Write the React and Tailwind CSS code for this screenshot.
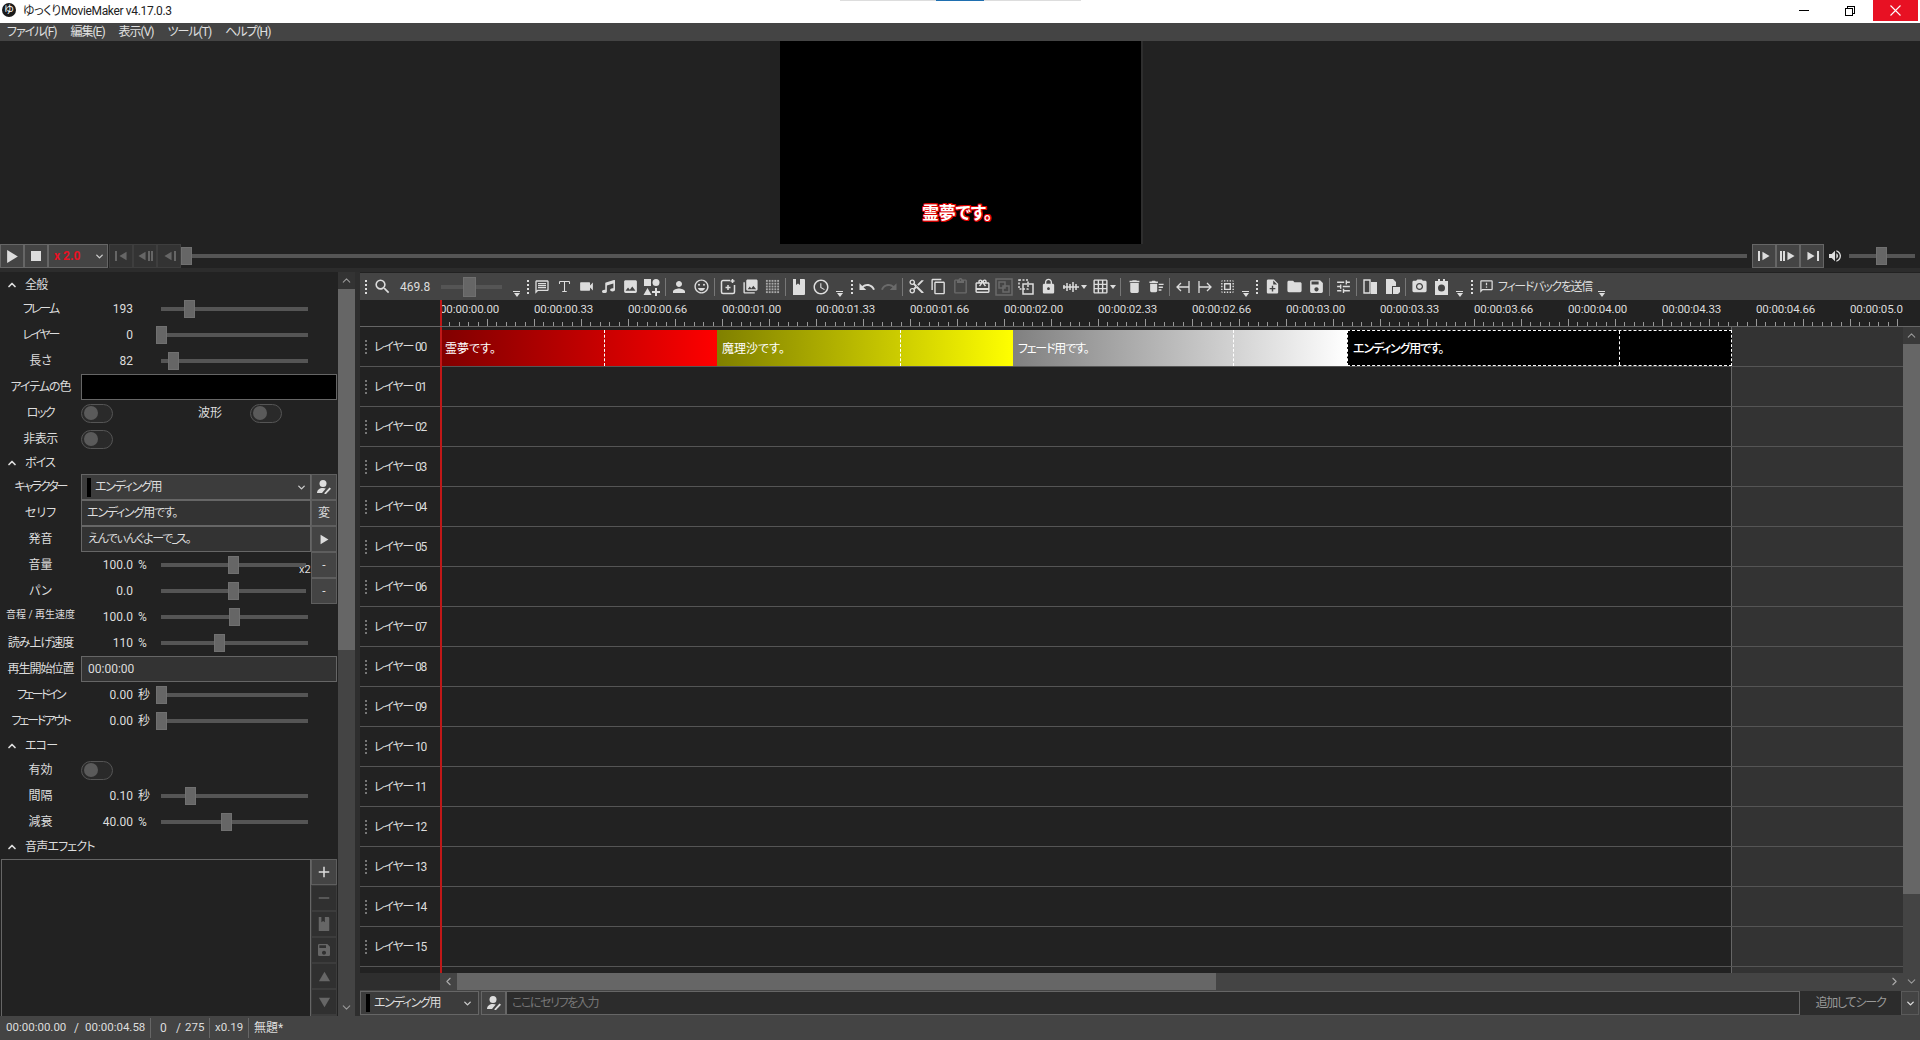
import React from 'react';
import { ChevronDown, ChevronUp, ChevronLeft, ChevronRight, Type } from 'lucide-react';
import { FaMusic } from 'react-icons/fa';
import {
  MdSearch, MdOutlineMessage, MdVideocam, MdImage, MdPerson, MdOutlineEmojiEmotions, MdPhotoLibrary,
  MdOutlineAccessTime, MdUndo, MdRedo, MdContentCut, MdContentCopy, MdOutlineContentPaste,
  MdOutlineCardGiftcard, MdLock, MdGridOn, MdDelete, MdDeleteSweep,
  MdSelectAll, MdNoteAdd, MdFolder, MdSave, MdTune, MdPhotoCamera, MdOutlineFeedback,
  MdVolumeUp, MdAdd, MdRemove,
} from 'react-icons/md';

// small hand drawn icons the packages don't have
const ShapesIcon = () => (
  <svg width="18" height="18" viewBox="0 0 18 18" fill="currentColor">
    <rect x="1" y="1" width="7" height="7" />
    <circle cx="13" cy="4.5" r="3.5" />
    <path d="M4.5 10l4 7h-8z" />
    <path d="M12 10h2v3h3v2h-3v3h-2v-3H9v-2h3z" />
  </svg>
);
const AddFrameIcon = () => (
  <svg width="16" height="16" viewBox="0 0 16 16" fill="none" stroke="currentColor" strokeWidth="1.5">
    <path d="M10 1.5H3a1.5 1.5 0 0 0-1.500 1.500v10A1.500 1.500 0 0 0 3 14.500h10a1.500 1.500 0 0 0 1.500-1.500V6" />
    <path d="M8 6v5M5.500 8.500h5M12.500 0v4M10.500 2h4" />
  </svg>
);
const DotGridIcon = () => (
  <svg width="15" height="15" viewBox="0 0 16 16" fill="#a8a8a8">
    {[1, 4, 7, 10, 13].map(y => [1, 4, 7, 10, 13].map(x => <rect key={x + '-' + y} x={x} y={y} width="2" height="2" />))}
  </svg>
);
const BookIcon = ({ size = 18 }) => (
  <svg width={size - 2} height={size} viewBox="0 0 16 18" fill="currentColor">
    <path d="M2 1h3v6l2-1.500L9 7V1h4a1 1 0 0 1 1 1v14a1 1 0 0 1-1 1H2z" />
  </svg>
);
const LayersIcon = () => (
  <svg width="18" height="18" viewBox="0 0 18 18" fill="none" stroke="currentColor" strokeWidth="1.5">
    <path d="M2 2h9v9H2z" strokeDasharray="2 1.500" />
    <path d="M6 6h10v10H6z" />
  </svg>
);
const DimFrameIcon = () => (
  <svg width="18" height="18" viewBox="0 0 18 18" fill="none" stroke="currentColor" strokeWidth="1.500">
    <rect x="1" y="1" width="16" height="16" />
    <rect x="4" y="4" width="6" height="6" />
    <rect x="8" y="8" width="6" height="6" />
  </svg>
);
const WaveIcon = () => (
  <svg width="16" height="16" viewBox="0 0 16 16" stroke="currentColor" strokeWidth="1.500">
    <path d="M1 6v4M4 4v8M7 5v6M10 3v10M13 5v6M0 8h16" />
  </svg>
);
const ArrowBarLeft = () => (
  <svg width="16" height="16" viewBox="0 0 16 16" fill="none" stroke="currentColor" strokeWidth="1.300">
    <path d="M14 2v12M14 8H2M6 4L2 8l4 4" />
  </svg>
);
const ArrowBarRight = () => (
  <svg width="16" height="16" viewBox="0 0 16 16" fill="none" stroke="currentColor" strokeWidth="1.300">
    <path d="M2 2v12M2 8h12M10 4l4 4-4 4" />
  </svg>
);
const PagesIcon = ({ flip }) => (
  <svg width="17" height="17" viewBox="0 0 17 17" fill="currentColor">
    {flip ? (
      <>
        <path d="M2 1h7l3 3v4H8v8H2z" />
        <path d="M9 9h7v5l-2 2H9z" />
      </>
    ) : (
      <>
        <path fill="none" stroke="currentColor" strokeWidth="1.400" d="M2 2h6v13H2z" />
        <path d="M9 4h6v12H9z" />
      </>
    )}
  </svg>
);
const ClipCamIcon = () => (
  <svg width="17" height="18" viewBox="0 0 17 18" fill="currentColor">
    <path fillRule="evenodd" d="M2 3h3V1h2v2h3V1h2v2h3v14H2zM8.500 6.500a3.500 3.500 0 1 0 0 7 3.500 3.500 0 0 0 0-7z" />
  </svg>
);
const PersonEdit = () => (
  <svg width="16" height="16" viewBox="0 0 16 16" fill="currentColor">
    <circle cx="7" cy="4.500" r="3.500" />
    <path d="M1 14c0-3 2.500-5 6-5 1 0 2 .2 2.800.5L6 14z" />
    <path d="M8.500 14l5-5.500 1.500 1.300L10 15H8.500z" />
  </svg>
);
const Overflow = () => (
  <div className="w-[15px] h-full flex flex-col items-center justify-end pb-[3px] gap-[1px] shrink-0">
    <div className="w-[7px] h-[1px] bg-[#ddd]" />
    <div className="w-0 h-0 border-x-[3.5px] border-x-transparent border-t-[4px] border-t-[#ddd]" />
  </div>
);
const Grip = ({ w = 'w-[8px]', color = 'border-[#ddd]' }) => (
  <div className={`${w} h-full flex items-center justify-center shrink-0`}>
    <div className={`h-[14px] border-l-2 border-dotted ${color}`} />
  </div>
);
const Sep = () => (
  <div className="w-[5px] h-full flex items-center justify-center shrink-0">
    <div className="h-[18px] w-[1px] bg-[#777]" />
  </div>
);
const Tool = ({ children, dim }) => (
  <div className={`w-[22px] h-full flex items-center justify-center shrink-0 ${dim ? 'text-[#6a6a6a]' : 'text-[#ddd]'}`}>
    {children}
  </div>
);
const Caret = () => <div className="w-0 h-0 border-x-[3px] border-x-transparent border-t-[4px] border-t-[#ddd]" />;

const Thumb = ({ left, cls = 'w-[11px] h-[18px]' }) => (
  <div className={`absolute top-1/2 -translate-y-1/2 bg-[#666] border border-[#707070] ${cls}`} style={{ left }} />
);

function Slider({ x, width = 'w-[147px]' }) {
  return (
    <div className={`relative h-[4px] bg-[#555] ${width}`}>
      <Thumb left={x - 161} />
    </div>
  );
}

const Toggle = () => (
  <div className="w-[32px] h-[19px] rounded-full border border-[#555] bg-[#2a2a2a] flex items-center pl-[2px]">
    <div className="w-[14px] h-[14px] rounded-full bg-[#5a5a5a]" />
  </div>
);

const Label = ({ children, small, t = '' }) => (
  <div className={`w-[81px] shrink-0 text-center whitespace-nowrap ${small ? 'text-[10px] pb-[5px]' : 'text-[12px]'} ${t}`}>{children}</div>
);

const Section = ({ title, h, extra = '' }) => (
  <div className={`flex items-center ${h} ${extra}`}>
    <ChevronUp size={12} strokeWidth={3.5} className="ml-[6px] text-[#ddd]" />
    <span className="ml-[7px] text-[12px] tracking-[-0.8px]">{title}</span>
  </div>
);

const SideBtn = ({ children, dim }) => (
  <div className={`w-[26px] h-[26px] shrink-0 flex items-center justify-center border ${dim ? 'border-[#3c3c3c] bg-[#303030] text-[#666]' : 'border-[#5e5e5e] bg-[#444] text-[#ddd]'}`}>
    {children}
  </div>
);

function SliderRow({ label, small, t, value, unit, x, right, narrow }) {
  return (
    <div className="h-[26px] flex items-center">
      <Label small={small} t={t}>{label}</Label>
      <div className="w-[52px] text-right text-[12px]">{value}</div>
      <div className="w-[28px] pl-[5px] text-[12px]">{unit}</div>
      <Slider x={x} width={narrow ? 'w-[145px]' : 'w-[147px]'} />
      {right && <div className="ml-auto mr-[1px]">{right}</div>}
    </div>
  );
}

const Triangle = ({ dir = 'right', size = 12 }) => {
  const d = { right: 'M2 1l10 6-10 6z', up: 'M7 2l6 10H1z', down: 'M1 2h12L7 12z', left: 'M12 1L2 7l10 6z' }[dir];
  return <svg width={size} height={size} viewBox="0 0 14 14" fill="currentColor"><path d={d} /></svg>;
};

const TBtn = ({ children, dim }) => (
  <div className={`w-[24px] h-[24px] shrink-0 flex items-center justify-center border ${dim ? 'bg-[#333] border-[#3e3e3e] text-[#666]' : 'bg-[#444] border-[#666] text-[#ddd]'}`}>
    {children}
  </div>
);

const VScroll = ({ thumb, topBg = 'bg-[#333]' }) => (
  <div className="w-[17px] shrink-0 h-full flex flex-col bg-[#444]">
    <div className={`h-[17px] flex items-center justify-center shrink-0 text-[#999] ${topBg}`}><ChevronUp size={13} /></div>
    <div className={`bg-[#666] shrink-0 ${thumb}`} />
    <div className="flex-1" />
    <div className="h-[17px] flex items-center justify-center shrink-0 text-[#999]"><ChevronDown size={13} /></div>
  </div>
);

const menus = ['ファイル(F)', '編集(E)', '表示(V)', 'ツール(T)', 'ヘルプ(H)'];

const rulerLabels = ['0.00', '0.33', '0.66', '1.00', '1.33', '1.66', '2.00', '2.33', '2.66', '3.00', '3.33', '3.66', '4.00', '4.33', '4.66', '5.00'];

function Clip({ w, cls, text, mark, dashed }) {
  return (
    <div className={`relative h-[36px] shrink-0 flex items-center pl-[5px] pt-[2px] text-white text-[12px] ${w} ${cls} ${dashed ? 'border border-dashed border-white' : ''}`}>
      {text}
      <div className={`absolute top-0 bottom-0 w-0 border-l border-dashed border-white ${mark}`} />
    </div>
  );
}

function LayerRow({ n, children }) {
  return (
    <div className="h-[40px] flex border-b border-[#555] shrink-0">
      <div className="w-[80px] shrink-0 flex items-center bg-[#222]">
        <Grip w="w-[11px]" color="border-[#777]" />
        <span className="ml-[3px] text-[12px] tracking-[-1.2px]">レイヤー {String(n).padStart(2, '0')}</span>
      </div>
      <div className="w-[1292px] shrink-0 bg-[#222] border-r border-[#666] pt-[3px] flex">{children}</div>
      <div className="flex-1 bg-[#333]" />
    </div>
  );
}

export default function App() {
  return (
    <div className="h-screen w-full flex flex-col overflow-hidden bg-[#222] text-[#ddd] font-['Roboto','Noto_Sans_CJK_JP',sans-serif] [font-feature-settings:'palt'] text-[12px]">
      {/* title bar */}
      <div className="relative h-[23px] shrink-0 bg-white flex items-start text-[#222]">
        <div className="ml-[2px] mt-[3px] w-[14px] h-[14px] rounded-full bg-[#1a1a1a] text-white text-[10px] leading-[14px] text-center">ゆ</div>
        <span className="ml-[7px] mt-[3px] text-[12px] leading-[16px] tracking-[-0.35px]">ゆっくりMovieMaker v4.17.0.3</span>
        <div className="absolute left-[840px] top-0 w-[241px] h-[1px] bg-[#ddd]" />
        <div className="absolute left-[936px] top-0 w-[48px] h-[1px] bg-[#1f6fb0]" />
        <div className="ml-auto flex h-[21px] pr-[2px]">
          <div className="w-[46px] flex items-center justify-center">
            <div className="w-[10px] h-[1px] bg-black" />
          </div>
          <div className="w-[46px] flex items-center justify-center">
            <div className="relative w-[10px] h-[10px]">
              <div className="absolute top-0 right-0 w-[8px] h-[8px] border border-black" />
              <div className="absolute bottom-0 left-0 w-[8px] h-[8px] border border-black bg-white" />
            </div>
          </div>
          <div className="w-[45px] bg-[#e81123] flex items-center justify-center">
            <svg width="11" height="11" viewBox="0 0 11 11" stroke="white" strokeWidth="1.100"><path d="M.5.5l10 10M10.500.5l-10 10" /></svg>
          </div>
        </div>
      </div>

      {/* menu */}
      <div className="h-[18px] shrink-0 bg-[#444] flex items-center pl-[7px] gap-[14px] text-[12px] text-[#e0e0e0] tracking-[-1px]">
        {menus.map(m => <span key={m}>{m}</span>)}
      </div>

      {/* preview */}
      <div className="h-[203px] shrink-0 flex justify-center">
        <div className="w-[363px] ml-[3px] bg-black border-r-2 border-[#2e2e2e] flex flex-col items-center justify-end pb-[21px] pr-[7px]">
          <span className="text-[17px] font-bold text-white leading-[20px] tracking-[-0.3px] [text-shadow:1px_0_0_#d00,-1px_0_0_#d00,0_1px_0_#d00,0_-1px_0_#d00,1px_1px_0_#d00,-1px_-1px_0_#d00,1px_-1px_0_#d00,-1px_1px_0_#d00]">霊夢です。</span>
        </div>
      </div>

      {/* transport */}
      <div className="h-[24px] shrink-0 flex items-center">
        <TBtn><Triangle size={15} /></TBtn>
        <TBtn><div className="w-[10px] h-[10px] bg-[#ddd]" /></TBtn>
        <div className="w-[60px] h-[24px] shrink-0 bg-[#444] border border-[#666] flex items-center pl-[5px] text-[#e81123] font-bold text-[12px]">
          x 2.0
          <ChevronDown size={11} strokeWidth={3} className="ml-auto mr-[2px] text-[#ccc]" />
        </div>
        <div className="w-[1px]" />
        <TBtn dim><div className="flex items-center gap-[1px]"><div className="w-[2px] h-[10px] bg-[#666]" /><Triangle dir="left" size={10} /></div></TBtn>
        <TBtn dim><div className="flex items-center gap-[1px]"><Triangle dir="left" size={10} /><div className="w-[2px] h-[10px] bg-[#666]" /><div className="w-[2px] h-[10px] bg-[#666]" /></div></TBtn>
        <TBtn dim><div className="flex items-center gap-[1px]"><Triangle dir="left" size={10} /><div className="w-[2px] h-[10px] bg-[#666]" /></div></TBtn>
        <div className="relative flex-1 h-[4px] bg-[#555] mr-[5px]">
          <Thumb left={0} />
        </div>
        <TBtn><div className="flex items-center gap-[1px]"><div className="w-[2px] h-[10px] bg-[#ddd]" /><Triangle size={10} /></div></TBtn>
        <TBtn><div className="flex items-center gap-[1px]"><div className="w-[2px] h-[10px] bg-[#ddd]" /><div className="w-[2px] h-[10px] bg-[#ddd]" /><Triangle size={10} /></div></TBtn>
        <TBtn><div className="flex items-center gap-[1px]"><Triangle size={10} /><div className="w-[2px] h-[10px] bg-[#ddd]" /></div></TBtn>
        <MdVolumeUp size={16} className="ml-[3px] text-[#ddd]" />
        <div className="relative ml-[6px] w-[66px] h-[4px] bg-[#555] mr-[5px]">
          <Thumb left={27} />
        </div>
      </div>
      <div className="h-[4px] shrink-0 bg-[#2c2c2c]" />

      {/* main */}
      <div className="flex-1 min-h-0 flex">
        {/* properties */}
        <div className="w-[355px] shrink-0 flex h-full">
          <div className="w-[338px] flex flex-col h-full text-[#ddd]">
            <Section title="全般" h="h-[24px]" extra="pt-[2px]" />
            <SliderRow label="フレーム" t="tracking-[-2px]" value="193" x={184} />
            <SliderRow label="レイヤー" t="tracking-[-2px]" value="0" x={156} />
            <SliderRow label="長さ" value="82" x={168} />
            <div className="h-[26px] flex items-center">
              <Label t="tracking-[-1px]">アイテムの色</Label>
              <div className="w-[256px] h-[26px] bg-black border border-[#666]" />
            </div>
            <div className="h-[26px] flex items-center">
              <Label t="tracking-[-1.5px]">ロック</Label>
              <Toggle />
              <div className="w-[109px] text-right">波形</div>
              <div className="ml-[28px]"><Toggle /></div>
            </div>
            <div className="h-[26px] flex items-center">
              <Label t="tracking-[-0.5px]">非表示</Label>
              <Toggle />
            </div>
            <Section title="ボイス" h="h-[22px]" />
            <div className="h-[26px] flex items-center">
              <Label t="tracking-[-2px]">キャラクター</Label>
              <div className="w-[230px] h-[26px] bg-[#3c3c3c] border border-[#666] flex items-center pl-[5px] tracking-[-1.3px]">
                <div className="w-[4px] h-[19px] bg-black mr-[4px]" />
                エンディング用
                <ChevronDown size={11} strokeWidth={3} className="ml-auto mr-[3px] text-[#ccc]" />
              </div>
              <SideBtn><PersonEdit /></SideBtn>
            </div>
            <div className="h-[26px] flex items-center">
              <Label>セリフ</Label>
              <div className="w-[230px] h-[26px] bg-[#333] border border-[#666] flex items-center pl-[5px] tracking-[-1.2px]">エンディング用です。</div>
              <SideBtn>変</SideBtn>
            </div>
            <div className="h-[26px] flex items-center">
              <Label>発音</Label>
              <div className="w-[230px] h-[26px] bg-[#333] border border-[#666] flex items-center pl-[6px] tracking-[-1.3px]">えんでぃんぐよーで_ス。</div>
              <SideBtn><Triangle size={11} /></SideBtn>
            </div>
            <div className="relative">
              <SliderRow label="音量" value="100.0" unit="%" x={228} narrow right={<SideBtn>-</SideBtn>} />
              <span className="absolute left-[299px] top-[11px] text-[11px] leading-[14px]">x2</span>
            </div>
            <SliderRow label="パン" value="0.0" x={228} narrow right={<SideBtn>-</SideBtn>} />
            <SliderRow label="音程 / 再生速度" small value="100.0" unit="%" x={229} />
            <SliderRow label="読み上げ速度" t="tracking-[-1px]" value="110" unit="%" x={214} />
            <div className="h-[26px] flex items-center">
              <Label t="tracking-[-1px]">再生開始位置</Label>
              <div className="w-[256px] h-[26px] bg-[#333] border border-[#666] flex items-center pl-[6px]">00:00:00</div>
            </div>
            <SliderRow label="フェードイン" t="tracking-[-2.5px]" value="0.00" unit="秒" x={156} />
            <SliderRow label="フェードアウト" t="tracking-[-2px]" value="0.00" unit="秒" x={156} />
            <Section title="エコー" h="h-[23px]" />
            <div className="h-[26px] flex items-center">
              <Label>有効</Label>
              <Toggle />
            </div>
            <SliderRow label="間隔" value="0.10" unit="秒" x={185} />
            <SliderRow label="減衰" value="40.00" unit="%" x={221} />
            <Section title="音声エフェクト" h="h-[24px]" />
            <div className="flex-1 min-h-0 flex pl-[1px] overflow-hidden">
              <div className="w-[310px] h-full border border-b-0 border-[#666] bg-[#222]" />
              <div className="flex flex-col">
                <SideBtn><MdAdd size={18} /></SideBtn>
                <SideBtn dim><MdRemove size={18} /></SideBtn>
                <SideBtn dim><BookIcon size={16} /></SideBtn>
                <SideBtn dim><MdSave size={16} /></SideBtn>
                <SideBtn dim><Triangle dir="up" size={13} /></SideBtn>
                <SideBtn dim><Triangle dir="down" size={13} /></SideBtn>
                <SideBtn dim />
              </div>
            </div>
          </div>
          <VScroll thumb="h-[361px]" />
        </div>
        <div className="w-[5px] shrink-0 bg-[#2e2e2e]" />

        {/* timeline side */}
        <div className="flex-1 min-w-0 flex flex-col pt-[1px]">
          {/* toolbar */}
          <div className="h-[27px] shrink-0 bg-[#444] flex items-center text-[12px] text-[#ddd]">
            <Grip w="w-[11px]" />
            <Tool><MdSearch size={19} /></Tool>
            <span className="ml-[7px] w-[41px] shrink-0">469.8</span>
            <div className="relative w-[61px] h-[4px] bg-[#555] shrink-0">
              <Thumb left={22} cls="w-[13px] h-[20px]" />
            </div>
            <div className="w-[7px] shrink-0" />
            <Overflow />
            <Grip w="w-[7px]" />
            <Tool><MdOutlineMessage size={16} /></Tool>
            <Tool><Type size={15} strokeWidth={1.7} /></Tool>
            <Tool><MdVideocam size={17} /></Tool>
            <Tool><FaMusic size={13} /></Tool>
            <Tool><MdImage size={17} /></Tool>
            <Tool><ShapesIcon /></Tool>
            <Sep />
            <Tool><MdPerson size={18} /></Tool>
            <Tool><MdOutlineEmojiEmotions size={17} /></Tool>
            <Sep />
            <Tool><AddFrameIcon /></Tool>
            <Tool><MdPhotoLibrary size={17} /></Tool>
            <Tool><DotGridIcon /></Tool>
            <Sep />
            <Tool><BookIcon /></Tool>
            <Tool><MdOutlineAccessTime size={18} /></Tool>
            <Overflow />
            <Grip w="w-[9px]" />
            <Tool><MdUndo size={18} /></Tool>
            <Tool dim><MdRedo size={18} /></Tool>
            <Sep />
            <Tool><MdContentCut size={17} /></Tool>
            <Tool><MdContentCopy size={17} /></Tool>
            <Tool dim><MdOutlineContentPaste size={17} /></Tool>
            <Tool><MdOutlineCardGiftcard size={17} /></Tool>
            <Tool dim><DimFrameIcon /></Tool>
            <Tool><LayersIcon /></Tool>
            <Tool><MdLock size={17} /></Tool>
            <div className="w-[33px] h-full shrink-0 flex items-center pl-[4px] gap-[2px] text-[#ddd]"><WaveIcon /><Caret /></div>
            <div className="w-[26px] h-full shrink-0 flex items-center gap-[1px] text-[#ddd]"><MdGridOn size={17} /><Caret /></div>
            <Sep />
            <Tool><MdDelete size={17} /></Tool>
            <Tool><MdDeleteSweep size={17} /></Tool>
            <Sep />
            <Tool><ArrowBarLeft /></Tool>
            <Tool><ArrowBarRight /></Tool>
            <Tool><MdSelectAll size={17} /></Tool>
            <Overflow />
            <Grip />
            <Tool><MdNoteAdd size={17} /></Tool>
            <Tool><MdFolder size={17} /></Tool>
            <Tool><MdSave size={17} /></Tool>
            <Sep />
            <Tool><MdTune size={17} /></Tool>
            <Sep />
            <Tool><PagesIcon /></Tool>
            <Tool><PagesIcon flip /></Tool>
            <Sep />
            <Tool><MdPhotoCamera size={17} /></Tool>
            <Tool><ClipCamIcon /></Tool>
            <Overflow />
            <Grip w="w-[9px]" />
            <div className="h-full flex items-center gap-[4px] pl-[3px] shrink-0 w-[118px] whitespace-nowrap tracking-[-1.3px]">
              <MdOutlineFeedback size={15} className="shrink-0" />
              <span>フィードバックを送信</span>
            </div>
            <Overflow />
          </div>

          {/* ruler */}
          <div className="h-[27px] shrink-0 flex bg-[#222] border-b border-[#666]">
            <div className="w-[80px] shrink-0" />
            <div className="relative w-[1463px] overflow-hidden shrink-0">
              <div className="flex h-[18px] items-center">
                {rulerLabels.map(l => (
                  <span key={l} className="w-[94px] shrink-0 text-[11.5px] tracking-[-0.1px] leading-[18px] whitespace-nowrap">00:00:0{l}</span>
                ))}
              </div>
              <svg className="absolute left-0 bottom-0" width="1463" height="7">
                {Array.from({ length: 156 }).map((_, i) => {
                  const x = Math.round(i * 9.4) + 0.5;
                  return <line key={i} x1={x} x2={x} y1={i % 5 === 0 ? 0 : 3} y2={7} stroke="#999" />;
                })}
              </svg>
              <div className="absolute left-0 top-0 bottom-0 w-[2px] bg-[#c01818]" />
            </div>
          </div>

          {/* tracks + vertical scrollbar */}
          <div className="flex-1 min-h-0 flex">
            <div className="flex-1 min-w-0 flex flex-col">
              <div className="relative h-[646px] shrink-0 flex flex-col overflow-hidden bg-[#222]">
                <LayerRow n={0}>
                  <Clip w="w-[277px]" cls="bg-gradient-to-r from-[#800000] to-[#ff0000]" text="霊夢です。" mark="left-[164px]" />
                  <Clip w="w-[296px]" cls="bg-gradient-to-r from-[#808000] to-[#ffff00]" text="魔理沙です。" mark="left-[183px]" />
                  <Clip w="w-[334px]" cls="bg-gradient-to-r from-[#808080] to-[#ffffff] tracking-[-1.2px]" text="フェード用です。" mark="left-[220px]" />
                  <Clip w="w-[385px]" cls="bg-black font-medium tracking-[-1.2px]" text="エンディング用です。" mark="left-[271px]" dashed />
                </LayerRow>
                {Array.from({ length: 15 }).map((_, i) => <LayerRow key={i} n={i + 1} />)}
                <div className="flex-1 flex">
                  <div className="w-[1372px] shrink-0 bg-[#222] border-r border-[#666]" />
                  <div className="flex-1 bg-[#333]" />
                </div>
                <div className="absolute left-[80px] top-0 bottom-0 w-[2px] bg-[#c01818]" />
              </div>
              {/* horizontal scrollbar */}
              <div className="h-[17px] shrink-0 flex">
                <div className="w-[80px] shrink-0 bg-[#2e2e2e]" />
                <div className="flex-1 flex bg-[#444]">
                  <div className="w-[17px] flex items-center justify-center text-[#aaa] shrink-0"><ChevronLeft size={13} /></div>
                  <div className="w-[759px] bg-[#666] shrink-0" />
                  <div className="flex-1" />
                  <div className="w-[17px] flex items-center justify-center text-[#aaa] shrink-0"><ChevronRight size={13} /></div>
                </div>
              </div>
            </div>
            <VScroll thumb="h-[550px]" topBg="bg-[#3a3a3a]" />
          </div>

          {/* seek / add row */}
          <div className="h-[26px] shrink-0 bg-[#444] flex items-start pt-[1px] pr-[1px]">
            <div className="w-[119px] h-[24px] shrink-0 border border-[#666] bg-[#3c3c3c] flex items-center pl-[5px] tracking-[-1.3px]">
              <div className="w-[4px] h-[18px] bg-black mr-[4px]" />
              エンディング用
              <ChevronDown size={11} strokeWidth={3} className="ml-auto mr-[5px] text-[#ccc]" />
            </div>
            <div className="w-[2px] shrink-0" />
            <div className="w-[25px] h-[24px] shrink-0 border border-[#666] bg-[#444] flex items-center justify-center"><PersonEdit /></div>
            <div className="flex-1 h-[24px] border border-[#666] bg-[#2c2c2c] flex items-center pl-[5px] text-[#777] tracking-[-1.4px]">ここにセリフを入力</div>
            <div className="w-[101px] h-[24px] shrink-0 bg-[#2c2c2c] flex items-center justify-center text-[#999] tracking-[-1.2px]">追加してシーク</div>
            <div className="w-[18px] h-[24px] shrink-0 border border-[#5a5a5a] bg-[#444] flex items-center justify-center"><ChevronDown size={11} strokeWidth={3} className="text-[#ddd]" /></div>
          </div>
        </div>
      </div>

      {/* status */}
      <div className="h-[24px] shrink-0 bg-[#444] flex items-center text-[12px] text-[#ddd]">
        <span className="ml-[6px] w-[60px] text-[11.5px]">00:00:00.00</span>
        <span className="ml-[8px] w-[11px]">/</span>
        <span className="w-[60px] text-[11.5px]">00:00:04.58</span>
        <div className="ml-[5px] w-[1px] h-[20px] bg-[#666]" />
        <span className="ml-[9px] w-[16px]">0</span>
        <span className="w-[9px]">/</span>
        <span className="w-[24px] text-[11.5px]">275</span>
        <div className="w-[1px] h-[20px] bg-[#666]" />
        <span className="ml-[5px] w-[33px] text-[11.5px]">x0.19</span>
        <div className="w-[1px] h-[20px] bg-[#666]" />
        <span className="ml-[5px]">無題*</span>
      </div>
    </div>
  );
}
